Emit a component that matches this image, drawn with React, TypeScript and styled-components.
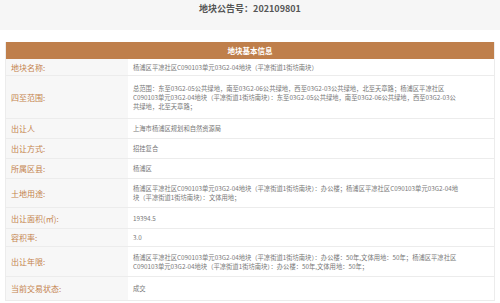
import styled, { createGlobalStyle } from "styled-components";

const GlobalStyle = createGlobalStyle`
  html, body {
    margin: 0;
    padding: 0;
    background: #ffffff;
    font-family: "Noto Sans CJK SC", "Noto Sans", sans-serif;
  }
`;

interface IRow {
  label: string;
  height: number;
  lines: string[];
}

const rows: IRow[] = [
  { label: "地块名称:", height: 17, lines: ["杨浦区平凉社区C090103单元03G2-04地块（平凉街道1街坊南块）"] },
  {
    label: "四至范围:",
    height: 43,
    lines: [
      "总范围：东至03G2-05公共绿地，南至03G2-06公共绿地，西至03G2-03公共绿地，北至天章路；杨浦区平凉社区",
      "C090103单元03G2-04地块（平凉街道1街坊南块）：东至03G2-05公共绿地，南至03G2-06公共绿地，西至03G2-03公",
      "共绿地，北至天章路；",
    ],
  },
  { label: "出让人", height: 20, lines: ["上海市杨浦区规划和自然资源局"] },
  { label: "出让方式:", height: 20, lines: ["招挂复合"] },
  { label: "所属区县:", height: 20, lines: ["杨浦区"] },
  {
    label: "土地用途:",
    height: 29,
    lines: [
      "杨浦区平凉社区C090103单元03G2-04地块（平凉街道1街坊南块）：办公楼；杨浦区平凉社区C090103单元03G2-04地",
      "块（平凉街道1街坊南块）：文体用地；",
    ],
  },
  { label: "出让面积(㎡):", height: 21, lines: ["19394.5"] },
  { label: "容积率:", height: 18, lines: ["3.0"] },
  {
    label: "出让年限:",
    height: 30,
    lines: [
      "杨浦区平凉社区C090103单元03G2-04地块（平凉街道1街坊南块）：办公楼：50年,文体用地：50年；杨浦区平凉社区",
      "C090103单元03G2-04地块（平凉街道1街坊南块）：办公楼：50年,文体用地：50年；",
    ],
  },
  { label: "当前交易状态:", height: 23, lines: ["成交"] },
];

export default function App() {
  return (
    <Page>
      <GlobalStyle />
      <TopBar>
        <Title>地块公告号：202109801</Title>
      </TopBar>
      <Table>
        <Header>地块基本信息</Header>
        {rows.map((row, i) => (
          <Row key={i} $height={row.height}>
            <Label>{row.label}</Label>
            <Value>
              {row.lines.map((line, j) => (
                <Line key={j}>{line}</Line>
              ))}
            </Value>
          </Row>
        ))}
      </Table>
    </Page>
  );
}

const Page = styled.div`
  width: 500px;
  height: 303px;
  overflow: hidden;
  background: #ffffff;
`;

const TopBar = styled.div`
  height: 30px;
  background: #f6f6f6;
  display: flex;
  justify-content: center;
`;

const Title = styled.div`
  margin-top: 3px;
  font-size: 9px;
  line-height: 12px;
  font-weight: bold;
  color: #555555;
`;

const Table = styled.div`
  margin: 12px 5px 0;
  border: 1px solid #ececec;
  border-top: none;
`;

const Header = styled.div`
  height: 17px;
  background: #bf7f4b;
  color: #ffffff;
  font-size: 7.5px;
  font-weight: bold;
  display: flex;
  align-items: center;
  justify-content: center;
`;

const Row = styled.div<{ $height: number }>`
  display: grid;
  grid-template-columns: 122px 1fr;
  height: ${(p) => p.$height}px;
  box-sizing: border-box;
  border-bottom: 1px solid #ececec;
  &:last-child {
    border-bottom: none;
  }
`;

const Label = styled.div`
  background: #f7f7f7;
  color: #c4834d;
  font-size: 8px;
  padding-left: 5px;
  display: flex;
  align-items: center;
`;

const Value = styled.div`
  padding: 0 5px;
  color: #777777;
  font-size: 6.3px;
  display: flex;
  flex-direction: column;
  justify-content: center;
`;

const Line = styled.div`
  line-height: 9px;
  white-space: nowrap;
`;
